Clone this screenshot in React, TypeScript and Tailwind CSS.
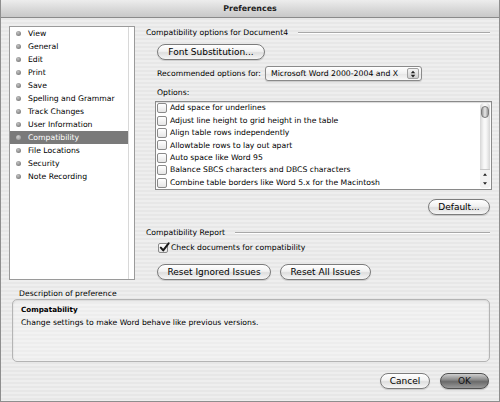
import React from "react";

const leftItems = [
  "View",
  "General",
  "Edit",
  "Print",
  "Save",
  "Spelling and Grammar",
  "Track Changes",
  "User Information",
  "Compatibility",
  "File Locations",
  "Security",
  "Note Recording",
];

const options = [
  "Add space for underlines",
  "Adjust line height to grid height in the table",
  "Align table rows independently",
  "Allowtable rows to lay out apart",
  "Auto space like Word 95",
  "Balance SBCS characters and DBCS characters",
  "Combine table borders like Word 5.x for the Macintosh",
];

function Pill({ children, className = "" }: { children: React.ReactNode; className?: string }) {
  return (
    <div
      className={
        "h-[16px] rounded-full border border-[#7c7c7c] bg-[linear-gradient(180deg,#ffffff_0%,#f1f1f1_45%,#dedede_55%,#f6f6f6_100%)] flex items-center justify-center text-[9px] leading-none shadow-[0_1px_1px_rgba(0,0,0,0.15)] " +
        className
      }
    >
      {children}
    </div>
  );
}

function Box({ checked = false }: { checked?: boolean }) {
  return (
    <div className="w-[10px] h-[10px] shrink-0 rounded-[2px] border border-[#8a8a8a] bg-[linear-gradient(180deg,#ffffff,#e6e6e6)] relative">
      {checked && (
        <svg viewBox="0 0 12 12" className="absolute left-[0px] top-[-2px] w-[11px] h-[11px]">
          <path d="M2 6.2 L4.6 9.2 L10.5 1.5" fill="none" stroke="#1a1a1a" strokeWidth="2.2" strokeLinecap="round" strokeLinejoin="round" />
        </svg>
      )}
    </div>
  );
}

export default function App() {
  return (
    <div className="w-[500px] h-[402px] flex flex-col overflow-hidden border-x border-b border-[#8e8e8e] font-['DejaVu_Sans',sans-serif] text-[7.7px] text-black bg-[repeating-linear-gradient(180deg,#eeeeee_0px,#eeeeee_2px,#e7e7e7_2px,#e7e7e7_4px)]">
      {/* Title bar */}
      <div className="h-[18px] shrink-0 flex items-center justify-center bg-[linear-gradient(180deg,#ededed,#d6d6d6_60%,#c8c8c8)] border-b border-[#8a8a8a] font-bold text-[7.9px] text-[#222]">
        Preferences
      </div>

      {/* Top section */}
      <div className="flex flex-row h-[262px] shrink-0">
        {/* Left list */}
        <div className="ml-[8px] mt-[8px] w-[126px] h-[254px] border border-[#9a9a9a] bg-white flex flex-row">
          <div className="flex-1 flex flex-col">
            {leftItems.map((it) => {
              const sel = it === "Compatibility";
              return (
                <div
                  key={it}
                  className={
                    "h-[13px] flex items-center pl-[6px] gap-[7px] " +
                    (sel ? "bg-[#7a7a7a] text-white" : "")
                  }
                >
                  <div
                    className={
                      "w-[5px] h-[5px] rounded-full " +
                      (sel
                        ? "bg-[radial-gradient(circle_at_40%_35%,#cfcfcf,#8e8e8e)]"
                        : "bg-[radial-gradient(circle_at_40%_35%,#c4c4c4,#646464)]")
                    }
                  />
                  <span>{it}</span>
                </div>
              );
            })}
          </div>
          <div className="w-[6px] border-l border-[#d8d8d8]" />
        </div>

        {/* Right panel */}
        <div className="ml-[11px] w-[346px] flex flex-col">
          <div className="mt-[8px] h-[14px] flex items-center gap-[10px]">
            <span>Compatibility options for Document4</span>
            <div className="flex-1 mr-[2px] h-[2px] border-t border-[#a8a8a8] border-b-white border-b" />
          </div>

          <Pill className="mt-[4px] ml-[11px] w-[108px]">Font Substitution...</Pill>

          <div className="mt-[6px] h-[15px] ml-[11px] flex items-center">
            <span>Recommended options for:</span>
            <div className="ml-[4px] w-[157px] h-[15px] rounded-[3px] border border-[#8a8a8a] bg-[linear-gradient(180deg,#ffffff,#f0f0f0_50%,#e4e4e4_51%,#f8f8f8)] flex items-center shadow-[0_1px_1px_rgba(0,0,0,0.15)]">
              <span className="pl-[5px] flex-1 text-[7.75px] whitespace-nowrap">Microsoft Word 2000-2004 and X</span>
              <div className="w-[12px] h-[11px] mr-[2px] rounded-[2px] border border-[#a0a0a0] bg-[linear-gradient(180deg,#f4f4f4,#cfcfcf)] flex items-center justify-center">
                <svg viewBox="0 0 8 10" className="w-[6px] h-[8px]">
                  <path d="M4 0.5 L7 4 L1 4 Z" fill="#222" />
                  <path d="M4 9.5 L7 6 L1 6 Z" fill="#222" />
                </svg>
              </div>
            </div>
          </div>

          <div className="mt-[5px] ml-[11px] h-[13px] flex items-center">Options:</div>

          <div className="mt-[2px] ml-[9px] w-[337px] h-[89px] border border-[#8a8a8a] bg-white flex flex-row shadow-[inset_0_1px_1px_rgba(0,0,0,0.15)]">
            <div className="flex-1 flex flex-col overflow-hidden">
              {options.map((o) => (
                <div key={o} className="h-[12.4px] shrink-0 flex items-center pl-[1px] gap-[3px]">
                  <Box />
                  <span className="whitespace-nowrap">{o}</span>
                </div>
              ))}
            </div>
            {/* Scrollbar */}
            <div className="w-[10px] mr-[1px] my-[1px] flex flex-col items-center bg-[linear-gradient(90deg,#d6d6d6,#f8f8f8_40%,#f8f8f8_60%,#d6d6d6)] rounded-[4px]">
              <div className="mt-[3px] w-[8px] h-[12px] rounded-full border border-[#7a7a7a] bg-[linear-gradient(90deg,#9a9a9a,#e8e8e8_50%,#9a9a9a)]" />
              <div className="flex-1" />
              <div className="w-[10px] h-[19px] flex flex-col items-center justify-around bg-[#f2f2f2] border-t border-[#c8c8c8] rounded-b-[4px]">
                <svg viewBox="0 0 6 4" className="w-[4px] h-[3px]">
                  <path d="M3 0 L6 4 L0 4 Z" fill="#222" />
                </svg>
                <svg viewBox="0 0 6 4" className="w-[4px] h-[3px]">
                  <path d="M3 4 L6 0 L0 0 Z" fill="#222" />
                </svg>
              </div>
            </div>
          </div>

          <div className="mt-[9px] flex flex-row justify-end pr-[2px]">
            <Pill className="w-[62px] h-[15px]">Default...</Pill>
          </div>

          <div className="mt-[11px] h-[14px] flex items-center gap-[10px]">
            <span>Compatibility Report</span>
            <div className="flex-1 mr-[2px] h-[2px] border-t border-[#a8a8a8] border-b-white border-b" />
          </div>

          <div className="mt-[2px] ml-[12px] h-[12px] flex items-center gap-[3px]">
            <Box checked />
            <span>Check documents for compatibility</span>
          </div>

          <div className="mt-[10px] ml-[11px] flex flex-row gap-[9px]">
            <Pill className="w-[114px] h-[16px]">Reset Ignored Issues</Pill>
            <Pill className="w-[91px] h-[16px]">Reset All Issues</Pill>
          </div>
        </div>
      </div>

      {/* Description */}
      <div className="mt-[8px] ml-[18px] h-[11px] flex items-center">Description of preference</div>
      <div className="ml-[11px] w-[478px] h-[63px] rounded-[5px] border border-[#b4b4b4] shadow-[inset_0_1px_2px_rgba(0,0,0,0.12)] bg-[rgba(255,255,255,0.25)] px-[8px] pt-[4px] flex flex-col">
        <div className="h-[12px] flex items-center font-bold text-[7.2px]">Compatability</div>
        <div className="h-[13px] flex items-center">Change settings to make Word behave like previous versions.</div>
      </div>

      {/* Buttons */}
      <div className="mt-[11px] flex flex-row justify-end gap-[10px] pr-[10px]">
        <Pill className="w-[50px] h-[16px]">Cancel</Pill>
        <div className="w-[49px] h-[16px] rounded-full border border-[#505050] bg-[linear-gradient(180deg,#cfcfcf_0%,#8c8c8c_40%,#6a6a6a_55%,#9a9a9a_100%)] flex items-center justify-center text-[9px] leading-none text-[#111] shadow-[0_1px_1px_rgba(0,0,0,0.2)]">
          OK
        </div>
      </div>
    </div>
  );
}
